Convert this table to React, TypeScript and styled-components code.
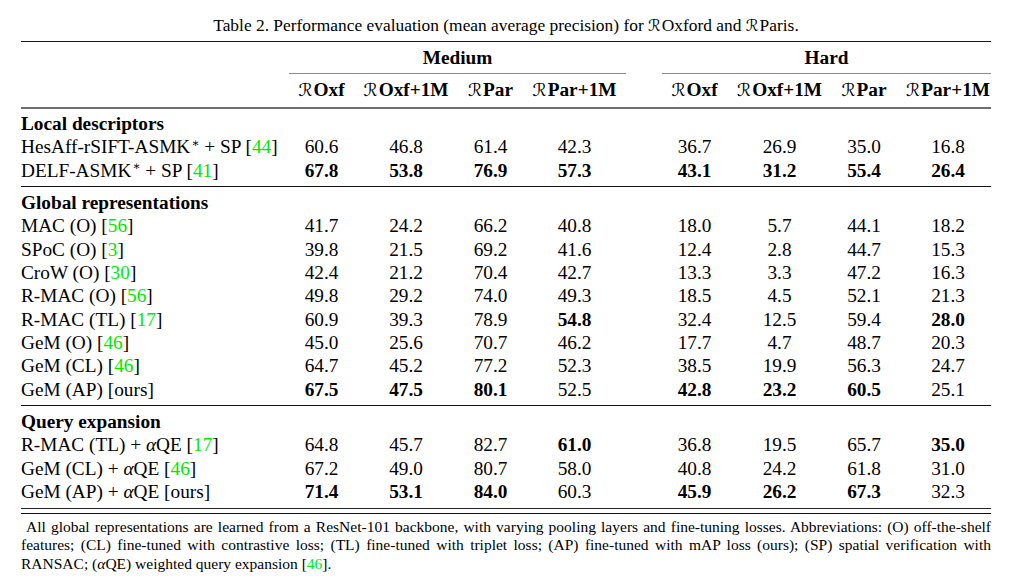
import React from "react";
import styled, { createGlobalStyle } from "styled-components";

const GlobalStyle = createGlobalStyle`
  html, body { margin: 0; padding: 0; background: #ffffff; }
  body {
    font-family: "Liberation Serif", "Times New Roman", "DejaVu Serif", serif;
    color: #000;
  }
`;

const COLS = "268px 65px 104px 65px 103px 36px 65px 105px 64px 95px";

const Page = styled.div`
  width: 970px;
  padding: 15px 0 0 21px;
`;

const Caption = styled.div`
  font-size: 17.4px;
  line-height: 20px;
  text-align: center;
  margin-bottom: 4.5px;
  white-space: nowrap;
`;

const Rule = styled.div<{ $h: number; $color: string; $gap?: number }>`
  height: ${(p) => p.$h}px;
  background: ${(p) => p.$color};
  margin-top: ${(p) => p.$gap ?? 0}px;
`;

const Grid = styled.div<{ $h: number }>`
  display: grid;
  grid-template-columns: ${COLS};
  height: ${(p) => p.$h}px;
  font-size: 19.3px;
  align-items: center;
`;

const GroupCell = styled.div<{ $span: string }>`
  grid-column: ${(p) => p.$span};
  align-self: stretch;
  border-bottom: 1px solid #8c8c8c;
  font-weight: bold;
  display: flex;
  align-items: center;
  justify-content: center;
`;

const HeadCell = styled.div`
  font-weight: bold;
  text-align: center;
  white-space: nowrap;
  padding: 0 8px;
  &:last-child {
    padding: 0 0 0 9px;
  }
`;

const Script = styled.span`
  font-family: "DejaVu Sans", "DejaVu Serif", "Noto Sans", serif;
  font-weight: normal;
  font-style: italic;
  font-size: 0.92em;
  margin-right: 1px;
`;

const Section = styled.div`
  padding: 4px 0;
`;

const Row = styled(Grid)`
  height: 23.333px;
`;

const Label = styled.div<{ $title?: boolean }>`
  font-weight: ${(p) => (p.$title ? "bold" : "normal")};
  white-space: nowrap;
  grid-column: ${(p) => (p.$title ? "1 / -1" : "auto")};
`;

const Value = styled.div<{ $bold: boolean }>`
  font-weight: ${(p) => (p.$bold ? "bold" : "normal")};
  text-align: center;
  padding: 0 8px;
  &:last-child {
    padding: 0 0 0 9px;
  }
`;

const Gap = styled.div``;

const Cite = styled.span`
  color: #00e800;
`;

const Sup = styled.sup`
  font-size: 0.62em;
  vertical-align: 0;
  position: relative;
  top: -0.55em;
  margin-left: 1px;
`;

const Alpha = styled.i`
  font-style: italic;
`;

const Footer = styled.div`
  margin-top: 3.5px;
  font-size: 15.5px;
  line-height: 18.5px;
`;

const FootLine = styled.div<{ $last?: boolean; $indent?: number }>`
  text-align: justify;
  text-align-last: ${(p) => (p.$last ? "left" : "justify")};
  text-indent: ${(p) => p.$indent ?? 0}px;
  white-space: nowrap;
`;

type DataRow = { label: React.ReactNode; values: string[] };

const ref = (n: string) => (
  <>
    [<Cite>{n}</Cite>]
  </>
);
const aQE = (
  <>
    <Alpha>α</Alpha>QE
  </>
);

const sections: { title: string; rows: DataRow[] }[] = [
  {
    title: "Local descriptors",
    rows: [
      {
        label: (
          <>
            HesAff-rSIFT-ASMK<Sup>∗</Sup> + SP {ref("44")}
          </>
        ),
        values: ["60.6", "46.8", "61.4", "42.3", "36.7", "26.9", "35.0", "16.8"],
      },
      {
        label: (
          <>
            DELF-ASMK<Sup>∗</Sup> + SP {ref("41")}
          </>
        ),
        values: ["*67.8", "*53.8", "*76.9", "*57.3", "*43.1", "*31.2", "*55.4", "*26.4"],
      },
    ],
  },
  {
    title: "Global representations",
    rows: [
      { label: <>MAC (O) {ref("56")}</>, values: ["41.7", "24.2", "66.2", "40.8", "18.0", "5.7", "44.1", "18.2"] },
      { label: <>SPoC (O) {ref("3")}</>, values: ["39.8", "21.5", "69.2", "41.6", "12.4", "2.8", "44.7", "15.3"] },
      { label: <>CroW (O) {ref("30")}</>, values: ["42.4", "21.2", "70.4", "42.7", "13.3", "3.3", "47.2", "16.3"] },
      { label: <>R-MAC (O) {ref("56")}</>, values: ["49.8", "29.2", "74.0", "49.3", "18.5", "4.5", "52.1", "21.3"] },
      { label: <>R-MAC (TL) {ref("17")}</>, values: ["60.9", "39.3", "78.9", "*54.8", "32.4", "12.5", "59.4", "*28.0"] },
      { label: <>GeM (O) {ref("46")}</>, values: ["45.0", "25.6", "70.7", "46.2", "17.7", "4.7", "48.7", "20.3"] },
      { label: <>GeM (CL) {ref("46")}</>, values: ["64.7", "45.2", "77.2", "52.3", "38.5", "19.9", "56.3", "24.7"] },
      { label: <>GeM (AP) [ours]</>, values: ["*67.5", "*47.5", "*80.1", "52.5", "*42.8", "*23.2", "*60.5", "25.1"] },
    ],
  },
  {
    title: "Query expansion",
    rows: [
      { label: <>R-MAC (TL) + {aQE} {ref("17")}</>, values: ["64.8", "45.7", "82.7", "*61.0", "36.8", "19.5", "65.7", "*35.0"] },
      { label: <>GeM (CL) + {aQE} {ref("46")}</>, values: ["67.2", "49.0", "80.7", "58.0", "40.8", "24.2", "61.8", "31.0"] },
      { label: <>GeM (AP) + {aQE} [ours]</>, values: ["*71.4", "*53.1", "*84.0", "60.3", "*45.9", "*26.2", "*67.3", "32.3"] },
    ],
  },
];

const heads = ["Oxf", "Oxf+1M", "Par", "Par+1M"];

const R = () => <Script>ℛ</Script>;

const Values: React.FC<{ values: string[] }> = ({ values }) => (
  <>
    {values.map((v, i) => {
      const bold = v.startsWith("*");
      const cell = (
        <Value key={i} $bold={bold}>
          {bold ? v.slice(1) : v}
        </Value>
      );
      return i === 4 ? [<Gap key="gap" />, cell] : cell;
    })}
  </>
);

export default function App() {
  return (
    <>
      <GlobalStyle />
      <Page>
        <Caption>
          Table 2. Performance evaluation (mean average precision) for <R />Oxford and <R />Paris.
        </Caption>
        <Rule $h={1.5} $color="#1a1a1a" />
        <Grid $h={32}>
          <Gap />
          <GroupCell $span="2 / 6">Medium</GroupCell>
          <Gap />
          <GroupCell $span="7 / 11">Hard</GroupCell>
        </Grid>
        <Grid $h={32.5}>
          <Gap />
          {heads.map((h) => (
            <HeadCell key={"m" + h}>
              <R />
              {h}
            </HeadCell>
          ))}
          <Gap />
          {heads.map((h) => (
            <HeadCell key={"h" + h}>
              <R />
              {h}
            </HeadCell>
          ))}
        </Grid>
        <Rule $h={2} $color="#6e6e6e" />
        {sections.map((s, si) => (
          <React.Fragment key={s.title}>
            <Section>
              <Row $h={23.333}>
                <Label $title>{s.title}</Label>
              </Row>
              {s.rows.map((r, ri) => (
                <Row $h={23.333} key={ri}>
                  <Label>{r.label}</Label>
                  <Values values={r.values} />
                </Row>
              ))}
            </Section>
            {si < sections.length - 1 ? (
              <Rule $h={1} $color="#111" />
            ) : (
              <>
                <Rule $h={1} $color="#222" />
                <Rule $h={1.5} $color="#111" $gap={4} />
              </>
            )}
          </React.Fragment>
        ))}
        <Footer>
          <FootLine $indent={5}>
            All global representations are learned from a ResNet-101 backbone, with varying pooling layers and fine-tuning losses. Abbreviations: (O) off-the-shelf
          </FootLine>
          <FootLine>
            features; (CL) fine-tuned with contrastive loss; (TL) fine-tuned with triplet loss; (AP) fine-tuned with mAP loss (ours); (SP) spatial verification with
          </FootLine>
          <FootLine $last>
            RANSAC; (<Alpha>α</Alpha>QE) weighted query expansion [<Cite>46</Cite>].
          </FootLine>
        </Footer>
      </Page>
    </>
  );
}
